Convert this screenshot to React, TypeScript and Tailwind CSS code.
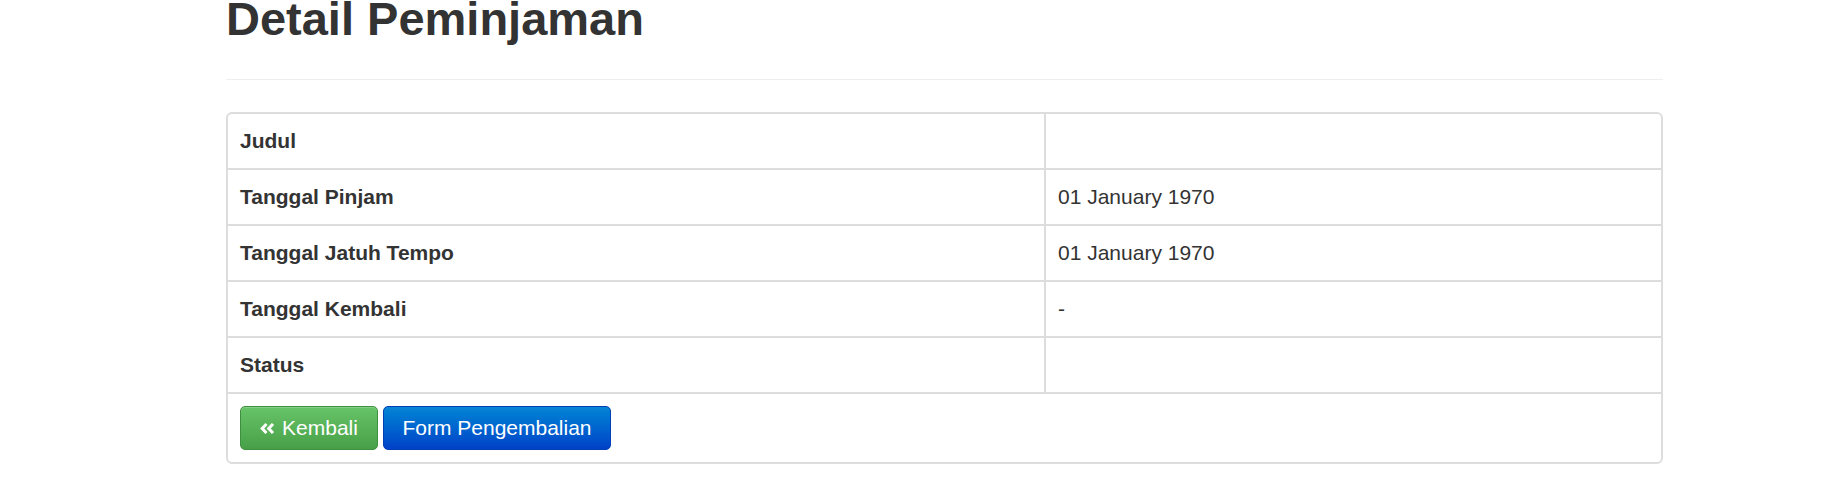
const rows = [
  { label: "Judul", value: "" },
  { label: "Tanggal Pinjam", value: "01 January 1970" },
  { label: "Tanggal Jatuh Tempo", value: "01 January 1970" },
  { label: "Tanggal Kembali", value: "-" },
  { label: "Status", value: "" },
];

function DoubleLeft() {
  return (
    <svg width="15" height="11" viewBox="0 0 15 11" fill="none" stroke="currentColor" strokeWidth="3" strokeLinejoin="miter">
      <polyline points="6.5,1 2.2,5.5 6.5,10" />
      <polyline points="13,1 8.7,5.5 13,10" />
    </svg>
  );
}

export default function App() {
  return (
    <div className="min-h-[488px] bg-white text-[#333] font-['Liberation_Sans',Arial,sans-serif] overflow-hidden">
      <div className="ml-[226px] w-[1437px]">
        <div className="h-[80px] border-b border-[#eee]">
          <h1 className="text-[47px] leading-[37px] font-bold">Detail Peminjaman</h1>
        </div>

        <div className="mt-[32px] border-2 border-[#ddd] rounded-[6px] text-[21px] leading-[30px]">
          {rows.map((row) => (
            <div key={row.label} className="flex border-b-2 border-[#ddd]">
              <div className="w-[818px] h-[54px] flex items-center px-[12px] border-r-2 border-[#ddd] font-bold">
                {row.label}
              </div>
              <div className="flex-1 h-[54px] flex items-center px-[12px]">{row.value}</div>
            </div>
          ))}
          <div className="h-[68px] flex items-center gap-[5px] px-[12px]">
            <button className="h-[44px] w-[138px] flex items-center justify-center gap-[7px] rounded-[5px] border border-[#3e8f3e] bg-gradient-to-b from-[#68c468] to-[#47a047] text-white shadow-[inset_0_1px_0_rgba(255,255,255,0.2)]">
              <DoubleLeft />
              <span>Kembali</span>
            </button>
            <button className="h-[44px] w-[228px] flex items-center justify-center rounded-[5px] border border-[#0040b4] bg-gradient-to-b from-[#0a84d4] to-[#0040c8] text-white">
              Form Pengembalian
            </button>
          </div>
        </div>
      </div>
    </div>
  );
}
